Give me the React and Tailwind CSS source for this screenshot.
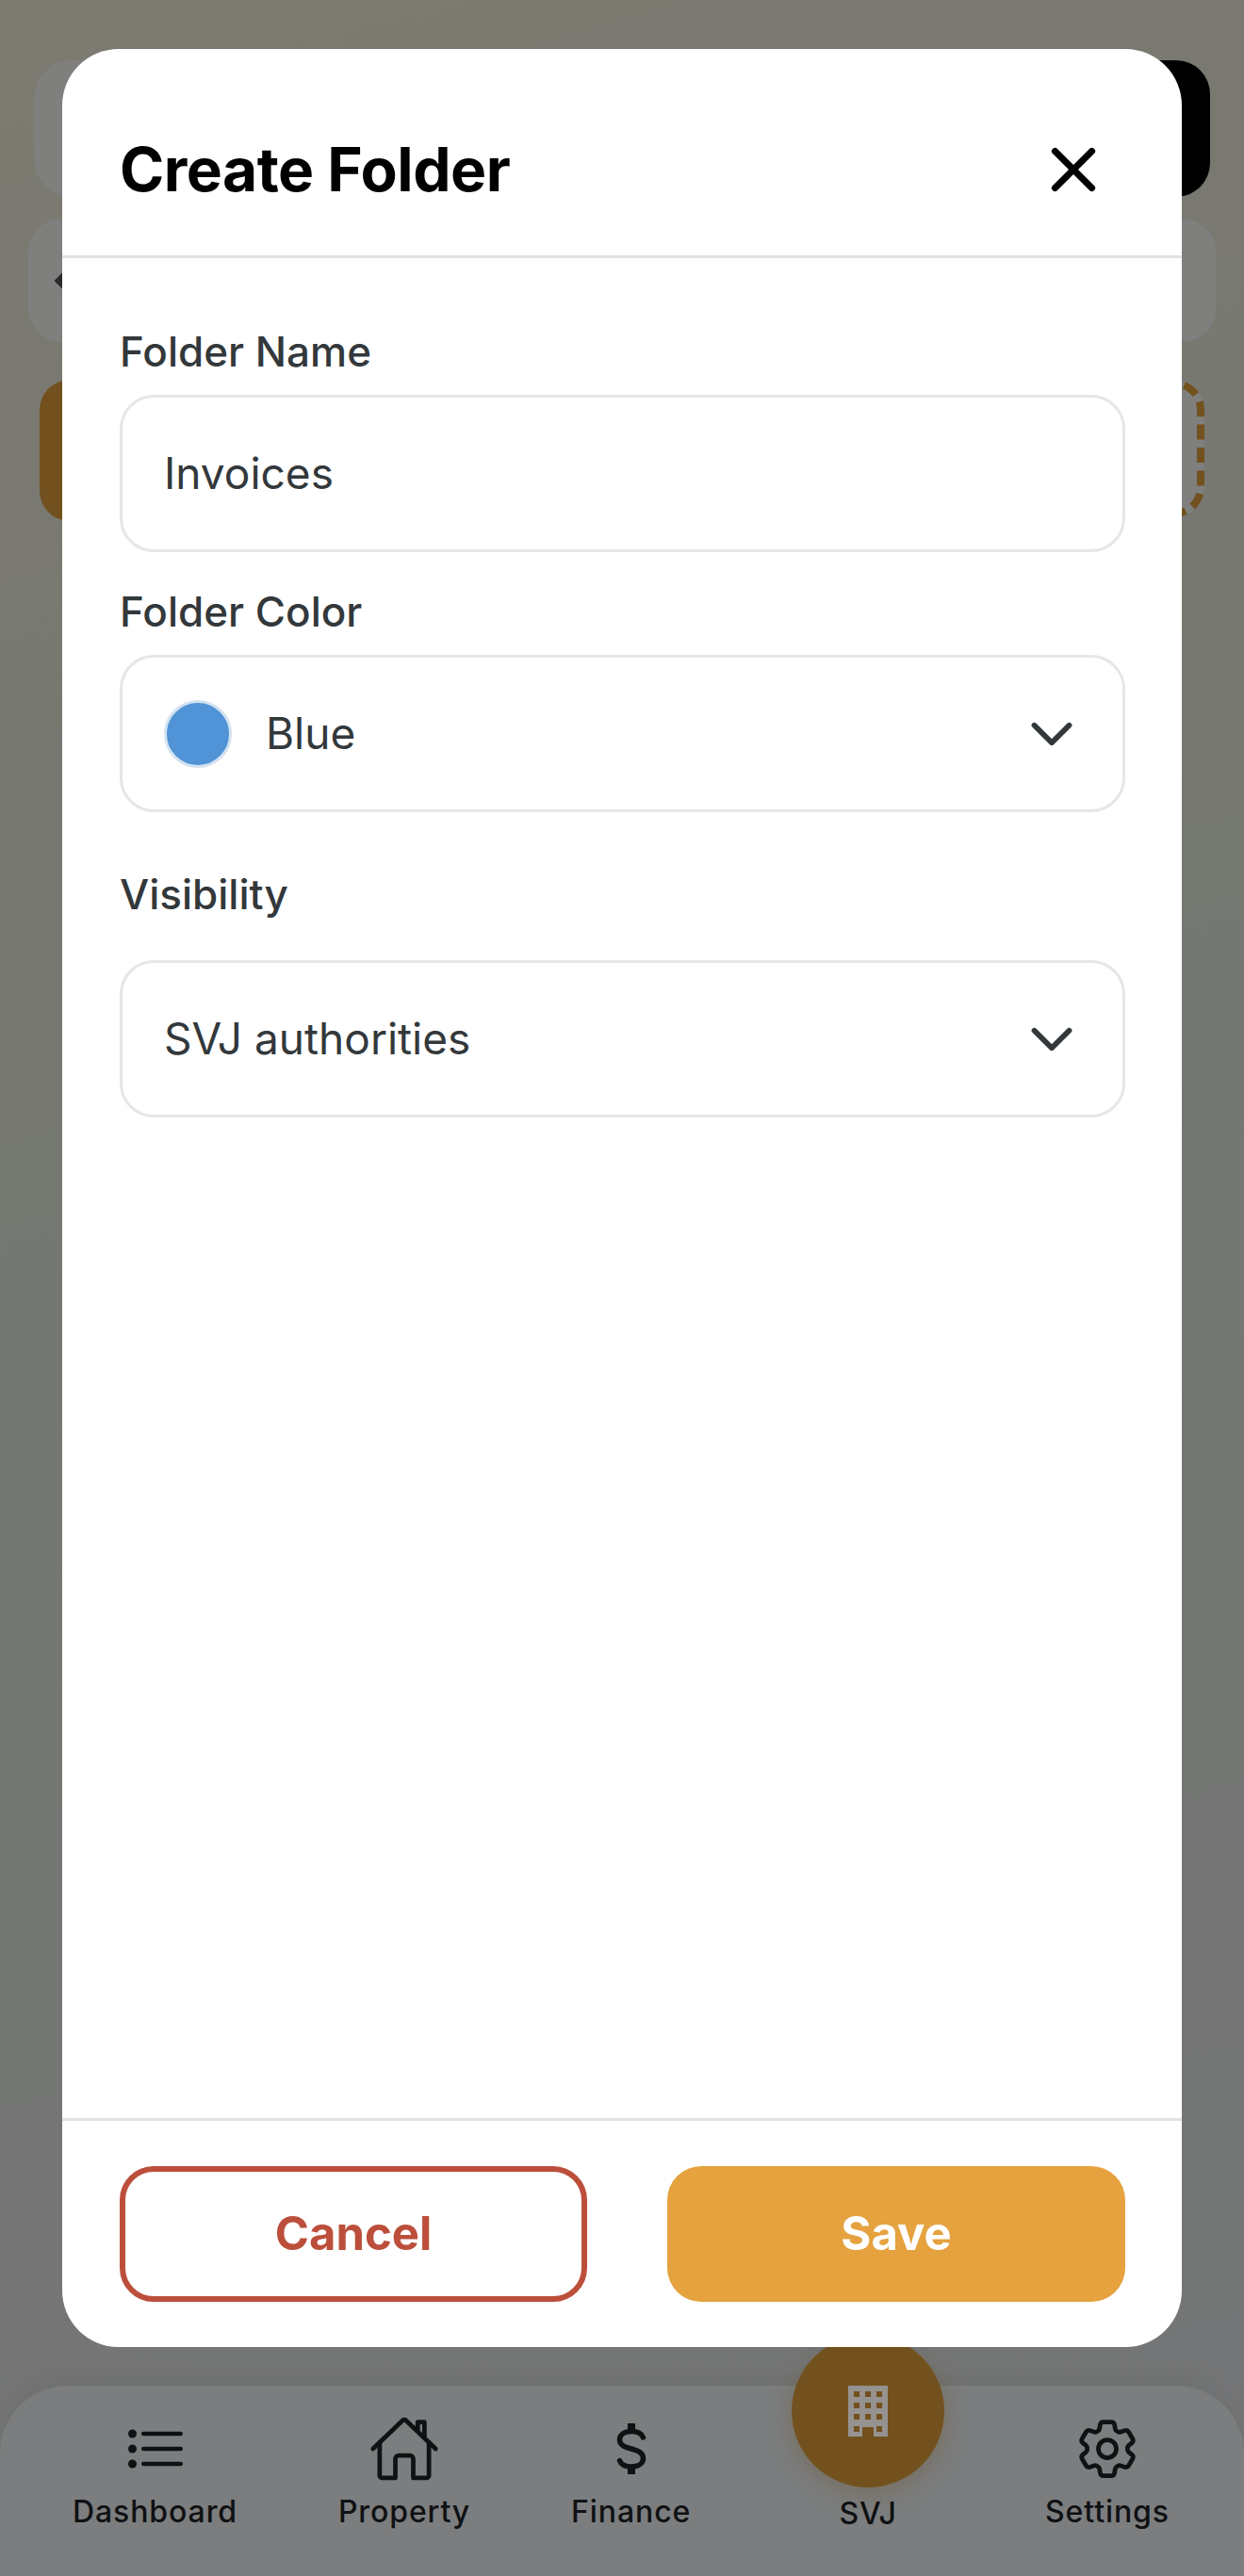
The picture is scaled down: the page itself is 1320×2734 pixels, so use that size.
import React from "react";
import { IoHomeOutline } from "react-icons/io5";
import { HiOutlineCog6Tooth } from "react-icons/hi2";
import { X, ChevronDown } from "lucide-react";

const ListIcon = () => (
  <svg viewBox="0 0 58 42" className="w-[58px] h-[42px]" fill="#1f2326">
    <circle cx="4.5" cy="5" r="4.5" />
    <circle cx="4.5" cy="21" r="4.5" />
    <circle cx="4.5" cy="37" r="4.5" />
    <rect x="14" y="2.7" width="44" height="4.6" rx="2.3" />
    <rect x="14" y="18.7" width="44" height="4.6" rx="2.3" />
    <rect x="14" y="34.7" width="44" height="4.6" rx="2.3" />
  </svg>
);

const DollarIcon = () => (
  <svg viewBox="0 0 32 54" className="w-[32px] h-[54px]" fill="none" stroke="#1f2326" strokeWidth="5.5" strokeLinecap="round">
    <path d="M16 0v8M16 46v8" strokeWidth="8" strokeLinecap="butt" />
    <path d="M28.5 15c-1.5-4-6-6.5-12.5-6.500C8.500 8.500 3.500 12 3.500 17.500c0 12 25 7 25 19.500 0 5.500-5 9-12.500 9-6.500 0-11-2.500-12.500-6.500" />
  </svg>
);

const BuildingIcon = () => (
  <svg viewBox="0 0 42 54" className="w-[42px] h-[54px] relative z-10" fill="#95928f">
    <path
      fillRule="evenodd"
      d="M0 0h42v54H27V44H15v10H0zM6 6v6h6V6zm12 0v6h6V6zm12 0v6h6V6zM6 18v6h6v-6zm12 0v6h6v-6zm12 0v6h6v-6zM6 30v6h6v-6zm12 0v6h6v-6zm12 0v6h6v-6zM6 43v6h6v-6zm24 0v6h6v-6z"
    />
  </svg>
);

const NavItem = ({ icon, label }) => (
  <div className="flex flex-col items-center">
    <div className="h-[64px] flex items-center justify-center">{icon}</div>
    <span className="mt-[11px] text-[32px] leading-[48px] font-medium tracking-[0.9px] text-[#1f2326]">{label}</span>
  </div>
);

const Field = ({ children }) => (
  <div className="h-[167px] border-[3px] border-[#e6e6e6] rounded-[36px] bg-white flex items-center pl-[44px] pr-[38px] text-[46px] text-[#33383b]">
    {children}
  </div>
);

const Chevron = () => <ChevronDown size={74} strokeWidth={1.9} color="#33383b" className="ml-auto" />;

const BackgroundPage = () => (
  <div className="h-full flex flex-col bg-[linear-gradient(165deg,#f9f5e2,#e9eee2_45%,#e8eaee)]">
    <div className="mt-[64px] ml-[36px] mr-[36px] flex gap-[24px]">
      <div className="flex-1 h-[145px] rounded-[40px] bg-[#ffffff]/90" />
      <div className="w-[200px] h-[145px] rounded-[36px] bg-black" />
    </div>
    <div className="mt-[23px] mx-[30px] h-[131px] rounded-[36px] bg-[#ffffff]/90 flex items-center pl-[30px]">
      <div className="w-[12px] h-[12px] rotate-45 bg-[#555]" />
    </div>
    <div className="mt-[40px] mx-[42px] flex justify-between">
      <div className="w-[200px] h-[150px] rounded-[32px] bg-[#e5a23f]" />
      <div className="w-[200px] h-[146px] rounded-[32px] bg-white/90 border-[8px] border-dashed border-[#e5a23f]" />
    </div>
    <div className="mt-auto h-[202px] rounded-t-[72px] bg-[#f6fafc] flex justify-between pl-[77px] pr-[79px] pt-[35px] shadow-[0_-6px_30px_rgba(0,0,0,0.06)]">
      <NavItem icon={<ListIcon />} label="Dashboard" />
      <NavItem icon={<IoHomeOutline size={76} color="#1f2326" />} label="Property" />
      <NavItem icon={<DollarIcon />} label="Finance" />
      <div className="w-[162px] flex flex-col items-center">
        <div className="-mt-[89px] w-[162px] h-[162px] rounded-full bg-[#e5a23f] flex items-center justify-center shadow-[0_6px_24px_rgba(229,162,63,0.35)]">
          <BuildingIcon />
        </div>
        <span className="mt-[4px] text-[32px] leading-[48px] font-medium tracking-[0.9px] text-[#1f2326]">SVJ</span>
      </div>
      <NavItem icon={<HiOutlineCog6Tooth size={76} color="#1f2326" />} label="Settings" />
    </div>
  </div>
);

const Modal = () => (
  <div className="absolute inset-0 bg-black/50">
    <div className="mt-[52px] mx-[66px] h-[2439px] bg-white rounded-[60px] flex flex-col">
      <div className="h-[222px] shrink-0 border-b-[3px] border-[#e2e2e2] flex items-center justify-between pl-[61px] pr-[76px] pt-[36px]">
        <h2 className="text-[64px] font-bold text-black tracking-[-0.5px]">Create Folder</h2>
        <X size={78} strokeWidth={2.2} color="#000000" />
      </div>
      <div className="flex-1 pl-[61px] pr-[60px] pt-[73px] flex flex-col">
        <label className="text-[44px] leading-[53px] font-medium text-[#33383b] mb-[19px]">Folder Name</label>
        <Field>Invoices</Field>
        <label className="mt-[37px] text-[44px] leading-[53px] font-medium text-[#33383b] mb-[19px]">Folder Color</label>
        <Field>
          <span className="w-[72px] h-[72px] rounded-full bg-[#5093d6] border-[3px] border-[#d3e2f1] mr-[36px]" />
          Blue
          <Chevron />
        </Field>
        <label className="mt-[61px] text-[44px] leading-[53px] font-medium text-[#33383b] mb-[43px]">Visibility</label>
        <Field>
          SVJ authorities
          <Chevron />
        </Field>
      </div>
      <div className="h-[243px] shrink-0 border-t-[3px] border-[#e2e2e2] pl-[61px] pr-[60px] pt-[48px] flex justify-between">
        <button className="w-[496px] h-[144px] rounded-[36px] border-[6px] border-[#bc4f3b] bg-white text-[49px] font-bold text-[#bc4f3b]">Cancel</button>
        <button className="w-[486px] h-[144px] rounded-[36px] bg-[#e5a23f] text-[49px] font-bold text-white">Save</button>
      </div>
    </div>
  </div>
);

export default function App() {
  return (
    <div className="relative w-[1320px] h-[2734px] overflow-hidden font-['Inter',sans-serif]">
      <BackgroundPage />
      <Modal />
    </div>
  );
}
